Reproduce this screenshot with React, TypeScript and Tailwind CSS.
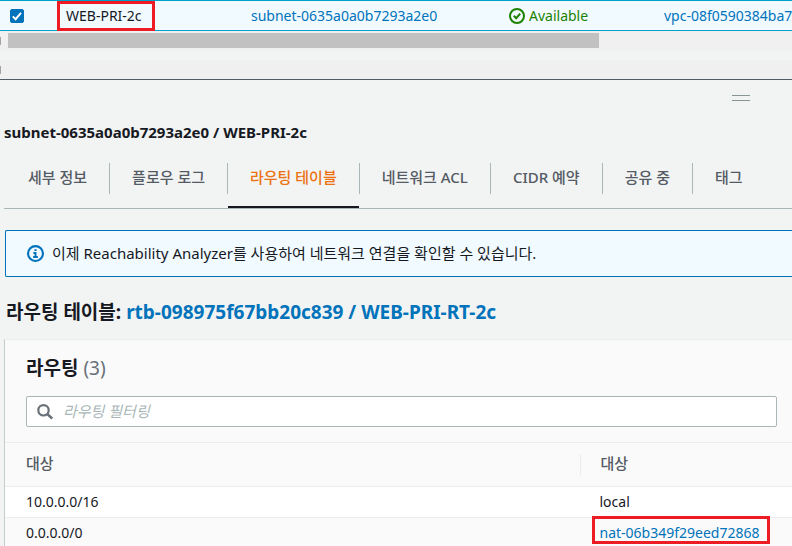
import { useState } from 'react';

const TABS = ['세부 정보', '플로우 로그', '라우팅 테이블', '네트워크 ACL', 'CIDR 예약', '공유 중', '태그'];

const ROUTES = [
  { destination: '10.0.0.0/16', target: 'local', isLink: false },
  { destination: '0.0.0.0/0', target: 'nat-06b349f29eed72868', isLink: true },
];

function StatusIcon() {
  return (
    <svg width="16" height="16" viewBox="0 0 16 16" fill="none" stroke="#1d8102" strokeWidth="2" aria-hidden="true">
      <circle cx="8" cy="8" r="7" />
      <path d="M4.8 7.8 7.2 10.2 11.2 5.6" />
    </svg>
  );
}

function InfoIcon() {
  return (
    <svg width="17" height="17" viewBox="0 0 16 16" fill="none" stroke="#0073bb" strokeWidth="2" aria-hidden="true">
      <circle cx="8" cy="8" r="7" />
      <path d="M6 7.5h2v4M5.8 11.3h4.4M7 4.8h2" strokeWidth="1.8" />
    </svg>
  );
}

function SearchIcon() {
  return (
    <svg width="16" height="16" viewBox="0 0 16 16" fill="none" stroke="#687078" strokeWidth="2.2" aria-hidden="true">
      <circle cx="6.5" cy="6.3" r="5.2" />
      <path d="M10.4 10.1 15.2 14.6" strokeWidth="2.6" />
    </svg>
  );
}

function SubnetRow() {
  const [selected, setSelected] = useState(true);

  return (
    <div className="overflow-hidden text-sm leading-[22px]">
      <table className="w-full table-fixed whitespace-nowrap">
        <tbody>
          <tr className="h-[30px] border-y border-[#00a1c9] bg-[#f1faff]">
            <td className="w-[57px] pl-[10px]">
              <label className="relative block size-[14px]">
                <input
                  type="checkbox"
                  aria-label="WEB-PRI-2c"
                  checked={selected}
                  onChange={(e) => setSelected(e.target.checked)}
                  className="block size-[14px] appearance-none rounded-xs border border-[#0073bb] bg-white checked:bg-[#0073bb]"
                />
                {selected && (
                  <svg className="pointer-events-none absolute inset-0" width="14" height="14" viewBox="0 0 14 14" fill="none" stroke="#fff" strokeWidth="2">
                    <path d="M2.8 7.4 5.6 10.2 11 3.8" />
                  </svg>
                )}
              </label>
            </td>
            <td className="w-[194px]">
              <span className="relative block w-[98px] pl-[9px]">
                WEB-PRI-2c
                <span className="absolute inset-x-0 -inset-y-1 border-3 border-[#ed1c24]" />
              </span>
            </td>
            <td className="w-[258px]">
              <a href="#subnet" className="text-[#0073bb]">subnet-0635a0a0b7293a2e0</a>
            </td>
            <td className="w-[155px]">
              <span className="flex items-center gap-1 text-[#1d8102]">
                <StatusIcon />
                Available
              </span>
            </td>
            <td>
              <a href="#vpc" className="text-[#0073bb]">vpc-08f0590384ba7</a>
            </td>
          </tr>
        </tbody>
      </table>
    </div>
  );
}

function Scrollbars() {
  return (
    <div aria-hidden="true">
      <div className="flex h-5 items-start bg-[#f0f0f0] pt-[2px]">
        <div className="mt-1 h-2 w-px bg-[#a3a3a3]" />
        <div className="ml-[7px] h-[15px] w-[74.6%] bg-[#c1c1c1]" />
      </div>
      <div className="h-[9px]" />
      <div className="flex h-[19px] items-center bg-[#f0f0f0]">
        <div className="h-2 w-px bg-[#a3a3a3]" />
      </div>
    </div>
  );
}

function Tabs() {
  const [active, setActive] = useState('라우팅 테이블');

  return (
    <div role="tablist" className="ml-1 flex h-[57px] border-b border-[#aab7b8] pl-[2px]">
      {TABS.map((tab) => (
        <div key={tab} className="group flex">
          <button
            type="button"
            role="tab"
            aria-selected={tab === active}
            onClick={() => setActive(tab)}
            className={`border-b-2 px-[22px] pb-1 font-medium whitespace-nowrap ${
              tab === active ? 'border-[#16191f] text-[#ec7211]' : 'border-transparent text-[#545b64]'
            }`}
          >
            {tab}
          </button>
          <span className="mt-[11px] h-[31px] w-px bg-[#aab7b8] group-last:hidden" />
        </div>
      ))}
    </div>
  );
}

function RoutesCard() {
  const [filter, setFilter] = useState('');
  const rows = ROUTES.filter((r) => r.destination.includes(filter) || r.target.includes(filter));

  return (
    <section className="ml-1 border-t border-l border-t-[#eaeded] border-l-[#c5cccc] bg-[#fafafa]">
      <h3 className="px-[21px] pt-[14px] text-[19px] leading-7 font-bold">
        라우팅 <span className="font-normal text-[#687078]">(3)</span>
      </h3>
      <div className="pt-[14px] pr-[15px] pb-[15px] pl-[21px]">
        <label className="flex h-[31px] items-center gap-[10px] rounded-xs border border-[#aab7b8] bg-white px-[10px]">
          <SearchIcon />
          <input
            type="text"
            aria-label="라우팅 필터링"
            placeholder="라우팅 필터링"
            value={filter}
            onChange={(e) => setFilter(e.target.value)}
            className="min-w-0 flex-1 pb-[2px] outline-none placeholder:text-[#aab7b8] placeholder:italic"
          />
        </label>
      </div>
      <table className="w-full table-fixed text-left">
        <thead>
          <tr className="h-11 border-y border-[#eaeded] text-[#545b64]">
            <th className="w-[73%] pb-[3px] pl-[21px] font-medium">대상</th>
            <th className="font-medium">
              <span className="flex h-[22px] items-center border-l border-[#eaeded] pb-[3px] pl-5">대상</span>
            </th>
          </tr>
        </thead>
        <tbody className="text-sm leading-[22px]">
          {rows.map((r) => (
            <tr key={r.destination} className="h-[31px] border-b border-[#eaeded] odd:bg-white">
              <td className="pl-[21px]">{r.destination}</td>
              <td className="pl-5 whitespace-nowrap">
                {r.isLink ? (
                  <span className="relative inline-block">
                    <a href="#nat" className="text-[#0073bb]">{r.target}</a>
                    <span className="absolute -top-[6px] -right-[10px] bottom-0 -left-2 border-3 border-[#ed1c24]" />
                  </span>
                ) : (
                  r.target
                )}
              </td>
            </tr>
          ))}
        </tbody>
      </table>
    </section>
  );
}

export default function App() {
  return (
    <main className="min-h-screen overflow-hidden bg-[#f2f3f3] font-['Noto_Sans','Noto_Sans_CJK_KR',sans-serif] text-[15px] leading-[22px] text-[#16191f]">
      <SubnetRow />
      <Scrollbars />
      <div className="border-t border-[#545b64]">
        <div className="flex justify-end pt-[15px] pr-[42px]">
          <div className="h-[6px] w-[18px] border-y border-[#879596]" />
        </div>
        <h1 className="mt-5 pl-1 font-bold">subnet-0635a0a0b7293a2e0 / WEB-PRI-2c</h1>
        <div className="mt-[9px]">
          <Tabs />
        </div>
        <div className="mt-[21px] ml-[5px] flex h-[47px] items-center gap-2 rounded-l-xs border border-r-0 border-[#0073bb] bg-[#f1faff] pl-[21px]">
          <InfoIcon />
          <span className="pb-[2px]">이제 Reachability Analyzer를 사용하여 네트워크 연결을 확인할 수 있습니다.</span>
        </div>
        <h2 className="mt-6 mb-[15px] pl-[6px] text-[19px] leading-[23px] font-bold">
          라우팅 테이블:{' '}
          <a href="#route-table" className="text-[#0073bb]">rtb-098975f67bb20c839 / WEB-PRI-RT-2c</a>
        </h2>
        <RoutesCard />
      </div>
    </main>
  );
}
